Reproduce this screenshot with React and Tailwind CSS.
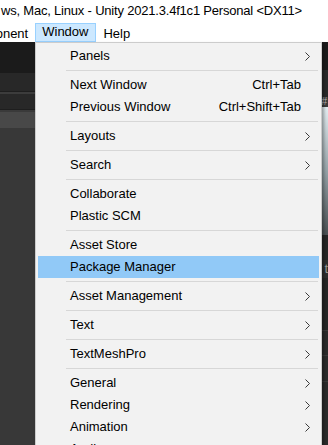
import clsx from "clsx";

const menuItems = [
  { label: "Panels", sub: true },
  { sep: true },
  { label: "Next Window", shortcut: "Ctrl+Tab" },
  { label: "Previous Window", shortcut: "Ctrl+Shift+Tab" },
  { sep: true },
  { label: "Layouts", sub: true },
  { sep: true },
  { label: "Search", sub: true },
  { sep: true },
  { label: "Collaborate" },
  { label: "Plastic SCM" },
  { sep: true },
  { label: "Asset Store" },
  { label: "Package Manager", active: true },
  { sep: true },
  { label: "Asset Management", sub: true },
  { sep: true },
  { label: "Text", sub: true },
  { sep: true },
  { label: "TextMeshPro", sub: true },
  { sep: true },
  { label: "General", sub: true },
  { label: "Rendering", sub: true },
  { label: "Animation", sub: true },
  { label: "Audio", sub: true },
  { label: "Sequencing", sub: true },
];

const Chevron = () => (
  <svg width="5" height="9" viewBox="0 0 5 9" className="mr-[9px]">
    <polyline points="0.5,0.5 4.5,4.5 0.5,8.5" fill="none" stroke="#3a3a3a" strokeWidth="1" />
  </svg>
);

const MenuRow = ({ item }) => {
  if (item.sep) {
    return (
      <div className="h-[7px] pt-[3px] pl-[30px] pr-[3px]">
        <div className="h-px bg-[#d7d7d7]" />
      </div>
    );
  }
  return (
    <div
      className={clsx(
        "flex items-center h-[22px] mx-[2px] pl-[32px]",
        item.active && "bg-[#91c9f7]"
      )}
    >
      <span className="flex-1">{item.label}</span>
      {item.shortcut && <span className="pr-[18px]">{item.shortcut}</span>}
      {item.sub && <Chevron />}
    </div>
  );
};

const App = () => {
  return (
    <div className="relative w-[328px] h-[445px] overflow-hidden bg-white text-[13px] text-black font-['Liberation_Sans',Arial,sans-serif] whitespace-nowrap">
      {/* title bar */}
      <div className="h-[22px] flex items-center pl-[1px] tracking-[-0.2px]">
        ws, Mac, Linux - Unity 2021.3.4f1c1 Personal &lt;DX11&gt;
      </div>

      {/* menu bar */}
      <div className="h-[20px] flex">
        <span className="-ml-[46px] px-[7px] pt-[2px]">Component</span>
        <span className="mt-[1px] h-[19px] pl-[6px] pr-[7px] bg-[#cce8ff] border border-[#99d1ff] leading-[16px]">
          Window
        </span>
        <span className="px-[7px] pt-[2px]">Help</span>
      </div>

      {/* editor behind the menu */}
      <div className="flex h-[403px]">
        <div className="w-[160px] flex flex-col">
          <div className="h-[31px] bg-[#1b1b1b]" />
          <div className="h-[18px] bg-[#282828]" />
          <div className="h-px bg-[#1e1e1e]" />
          <div className="h-[2px] bg-[#3c3c3c]" />
          <div className="h-[15px] bg-[#282828]" />
          <div className="h-px bg-[#1e1e1e]" />
          <div className="h-[2px] bg-[#3a3a3a]" />
          <div className="h-[16px] bg-[#484848]" />
          <div className="flex-1 bg-[#383838]" />
        </div>
        <div className="flex-1 flex flex-col">
          <div className="h-[28px] bg-[#1b1b1b]" />
          <div className="h-[27px] bg-[#2a2a2a]" />
          <div className="h-[10px] bg-[#3d3d3d] flex justify-end pr-[1px] text-[10px] leading-[10px] text-[#bdbdbd]">
            #
          </div>
          <div className="h-[128px] bg-gradient-to-b from-[#e4eef2] via-[#96a3a8] to-[#4a5053]" />
          <div className="h-[25px] bg-[#262626]" />
          <div className="h-[18px] bg-[#2d2d2d] flex justify-end pr-[0px] text-[13px] leading-[18px] text-[#9a9a9a]">
            t
          </div>
          <div className="h-[52px] bg-[#262626]" />
          <div className="h-px bg-[#3a3a3a]" />
          <div className="h-[24px] bg-[#2b2b2b]" />
          <div className="h-px bg-[#3a3a3a]" />
          <div className="h-[25px] bg-[#2b2b2b]" />
          <div className="h-px bg-[#3a3a3a]" />
          <div className="flex-1 bg-[#2b2b2b]" />
        </div>
      </div>

      {/* Window dropdown */}
      <div className="absolute left-[35px] top-[42px] w-[287px] h-[430px] bg-[#f2f2f2] border border-[#cccccc] pt-[2px] shadow-[2px_2px_3px_rgba(0,0,0,0.35)]">
        {menuItems.map((item, i) => (
          <MenuRow key={i} item={item} />
        ))}
      </div>
    </div>
  );
};

export default App;
